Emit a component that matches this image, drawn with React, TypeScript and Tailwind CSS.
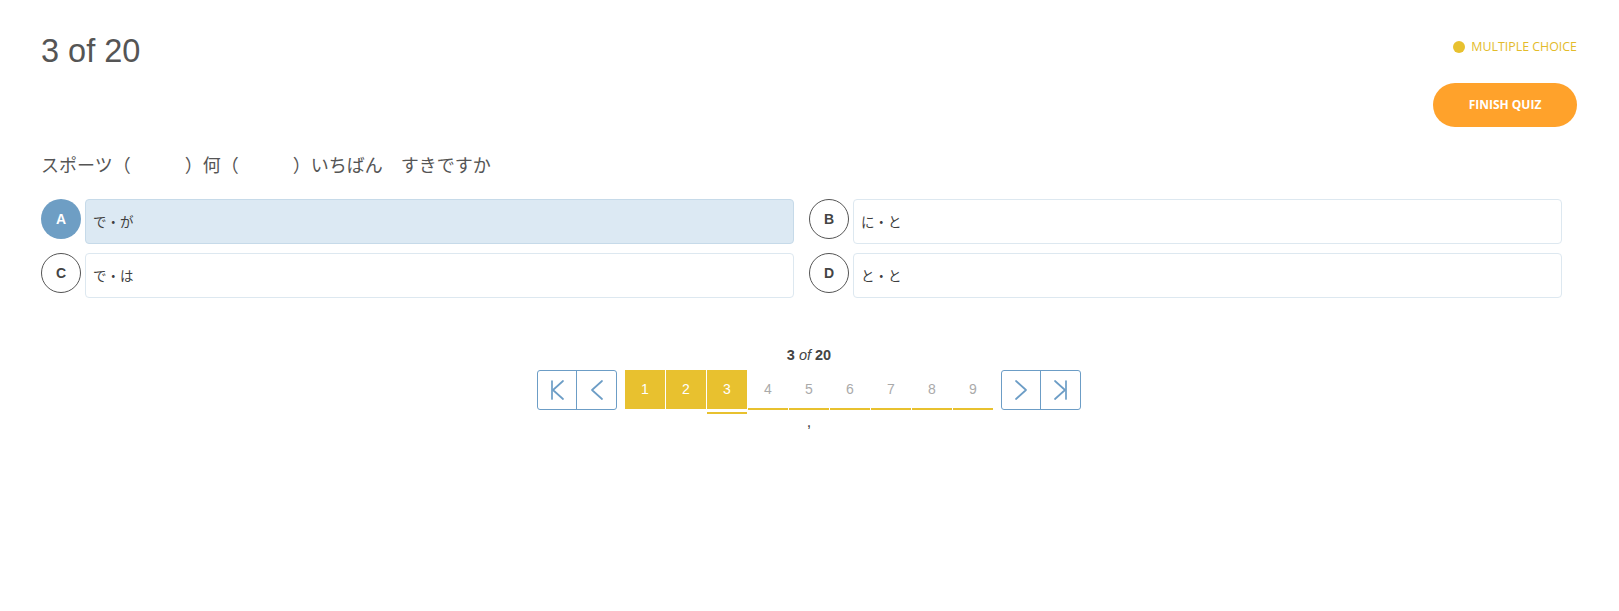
import React from "react";

function FirstIcon() {
  return (
    <svg width="15" height="20" viewBox="0 0 15 20" fill="none" stroke="#6c9dc6" strokeWidth="1.7" strokeLinecap="round" strokeLinejoin="round">
      <line x1="2" y1="1" x2="2" y2="19" />
      <polyline points="13,1 3,10 13,19" />
    </svg>
  );
}
function PrevIcon() {
  return (
    <svg width="12" height="20" viewBox="0 0 12 20" fill="none" stroke="#6c9dc6" strokeWidth="1.7" strokeLinecap="round" strokeLinejoin="round">
      <polyline points="11,1 1,10 11,19" />
    </svg>
  );
}
function NextIcon() {
  return (
    <svg width="12" height="20" viewBox="0 0 12 20" fill="none" stroke="#6c9dc6" strokeWidth="1.7" strokeLinecap="round" strokeLinejoin="round">
      <polyline points="1,1 11,10 1,19" />
    </svg>
  );
}
function LastIcon() {
  return (
    <svg width="15" height="20" viewBox="0 0 15 20" fill="none" stroke="#6c9dc6" strokeWidth="1.7" strokeLinecap="round" strokeLinejoin="round">
      <polyline points="2,1 12,10 2,19" />
      <line x1="13" y1="1" x2="13" y2="19" />
    </svg>
  );
}

type Opt = { letter: string; text: string; selected?: boolean };

function Option({ o }: { o: Opt }) {
  return (
    <div className="flex items-start gap-[4px] pr-[15px]">
      {o.selected ? (
        <div className="flex h-[40px] w-[40px] shrink-0 items-center justify-center rounded-full bg-[#6e9ec4] text-[14px] font-bold text-white">
          {o.letter}
        </div>
      ) : (
        <div className="flex h-[40px] w-[40px] shrink-0 items-center justify-center rounded-full border border-[#555] bg-white text-[14px] font-bold text-[#444]">
          {o.letter}
        </div>
      )}
      <div
        className={
          o.selected
            ? "flex h-[45px] flex-1 items-center rounded-[4px] border border-[#c6dae9] bg-[#dce9f3] px-[7px] font-['Noto_Sans_CJK_JP',sans-serif] text-[13.5px] text-[#3f3f3f]"
            : "flex h-[45px] flex-1 items-center rounded-[4px] border border-[#dde8f0] bg-white px-[7px] font-['Noto_Sans_CJK_JP',sans-serif] text-[13.5px] text-[#3f3f3f]"
        }
      >
        {o.text}
      </div>
    </div>
  );
}

export default function App() {
  const options: Opt[] = [
    { letter: "A", text: "で・が", selected: true },
    { letter: "B", text: "に・と" },
    { letter: "C", text: "で・は" },
    { letter: "D", text: "と・と" },
  ];
  const pages = [1, 2, 3, 4, 5, 6, 7, 8, 9];
  return (
    <div className="min-h-screen bg-white pl-[41px] pr-[42px] pt-[33px] font-['Liberation_Sans',Arial,sans-serif]">
      <div className="flex items-start justify-between">
        <h1 className="text-[32.5px] font-normal leading-[36px] text-[#555]">3 of 20</h1>
        <div className="flex flex-col items-end">
          <div className="mt-[7px] flex h-[14px] items-center gap-[6px]">
            <span className="h-[12px] w-[12px] rounded-full bg-[#e8c12f]" />
            <span className="font-['Open_Sans',sans-serif] text-[12.4px] leading-[14px] text-[#e3bb2a]">MULTIPLE CHOICE</span>
          </div>
          <button className="mt-[29px] flex h-[44px] w-[144px] items-center justify-center rounded-full bg-[#ffa22b] font-['Open_Sans',sans-serif] text-[12px] font-bold text-white">
            FINISH QUIZ
          </button>
        </div>
      </div>

      <p className="mt-[24px] font-['Noto_Sans_CJK_JP',sans-serif] text-[18px] leading-[27px] text-[#555]">
        スポーツ（　　　）何（　　　）いちばん　すきですか
      </p>

      <div className="mt-[21px] grid grid-cols-2 gap-y-[9px]">
        {options.map((o) => (
          <Option key={o.letter} o={o} />
        ))}
      </div>

      <div className="mt-[47px] flex flex-col items-center">
        <div className="text-[14.5px] leading-[20px] text-[#444]">
          <span className="font-bold">3</span> <span className="italic">of</span> <span className="font-bold">20</span>
        </div>
        <div className="mt-[5px] flex h-[40px] items-start">
          <div className="flex h-[40px] rounded-[3px] border border-[#6c9dc6]">
            <div className="flex w-[39px] items-center justify-center border-r border-[#6c9dc6]">
              <FirstIcon />
            </div>
            <div className="flex w-[39px] items-center justify-center">
              <PrevIcon />
            </div>
          </div>
          <div className="ml-[8px] mr-[8px] flex gap-[1px]">
            {pages.map((p) =>
              p <= 3 ? (
                <div key={p} className="relative flex h-[39px] w-[40px] items-center justify-center bg-[#e8c12f] text-[14px] text-white">
                  {p}
                  {p === 3 && <span className="absolute left-0 top-[42px] h-[2px] w-[40px] bg-[#e8c12f]" />}
                </div>
              ) : (
                <div key={p} className="flex h-[40px] w-[40px] items-center justify-center border-b-2 border-[#e8c12f] text-[14px] text-[#aaa]">
                  {p}
                </div>
              )
            )}
          </div>
          <div className="flex h-[40px] rounded-[3px] border border-[#6c9dc6]">
            <div className="flex w-[39px] items-center justify-center border-r border-[#6c9dc6]">
              <NextIcon />
            </div>
            <div className="flex w-[39px] items-center justify-center">
              <LastIcon />
            </div>
          </div>
        </div>
        <div className="mt-[3px] text-[16px] leading-[18px] text-[#444]">,</div>
      </div>
    </div>
  );
}
